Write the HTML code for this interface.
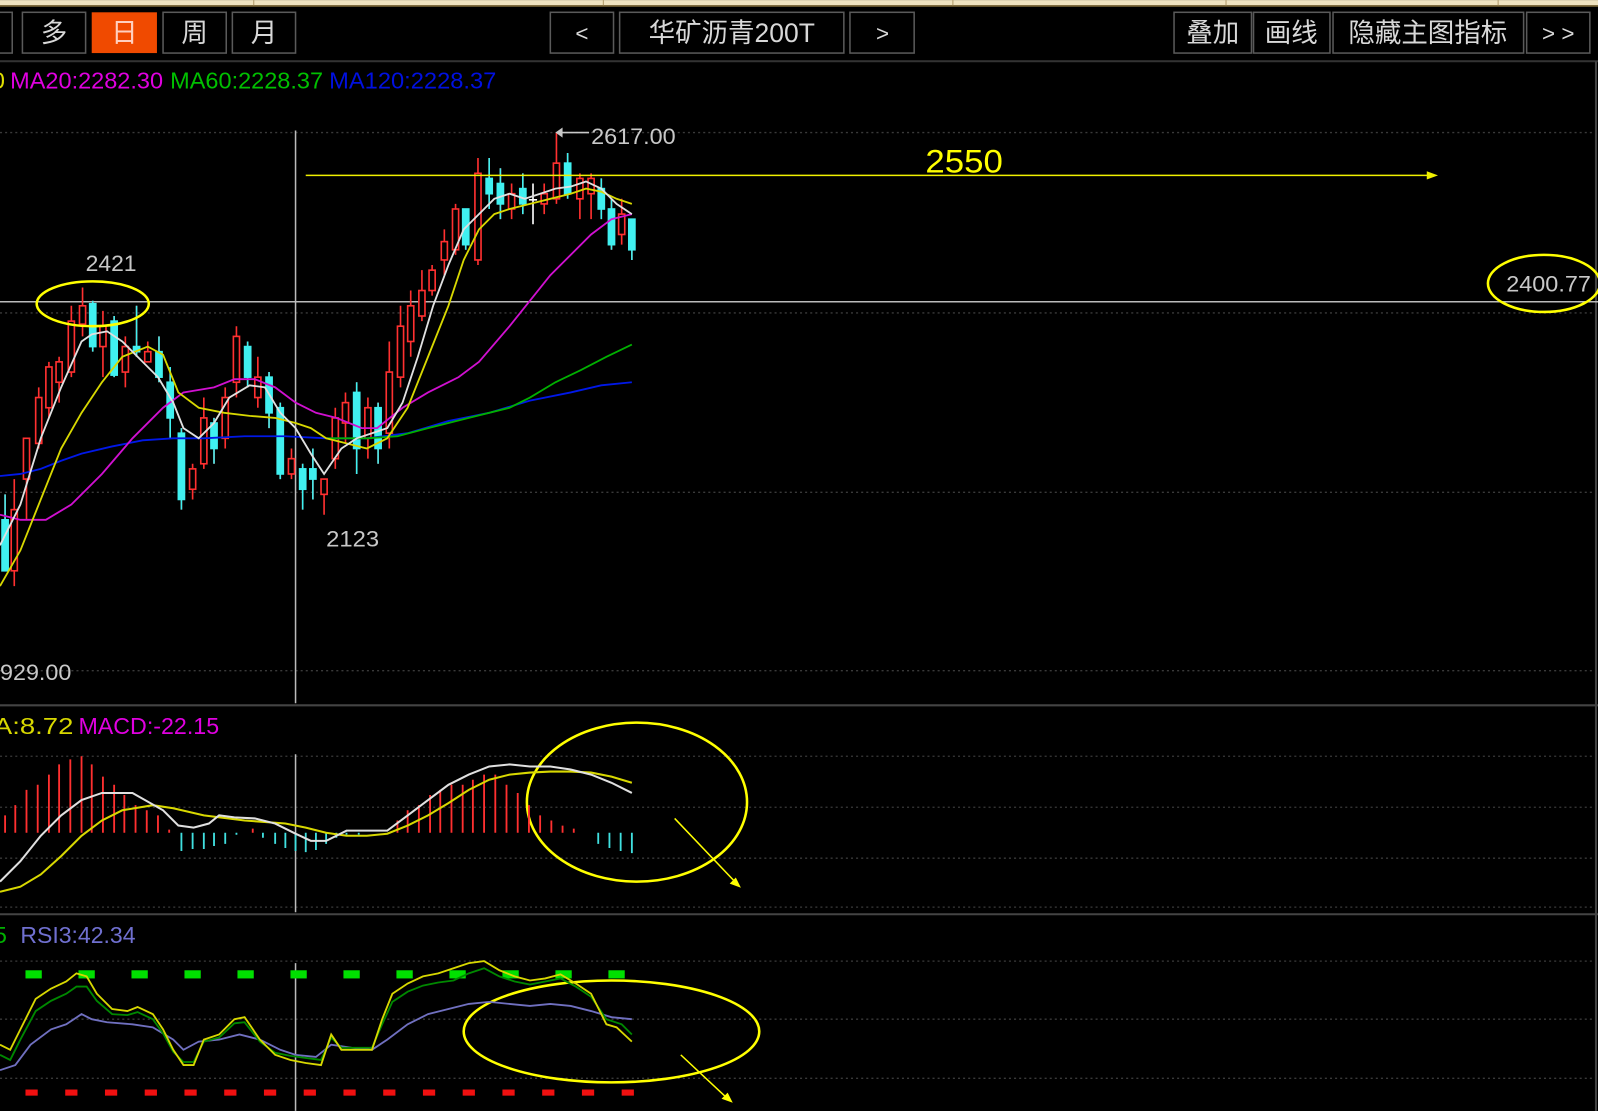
<!DOCTYPE html>
<html><head><meta charset="utf-8"><style>
html,body{margin:0;padding:0;background:#000;overflow:hidden}
svg{display:block}
text{font-family:"Liberation Sans","Noto Sans CJK SC",sans-serif}
</style></head><body>
<svg width="1598" height="1111" viewBox="0 0 1568 1090" xmlns="http://www.w3.org/2000/svg">
<rect width="1568" height="1090" fill="#000"/>
<rect x="0" y="0" width="1568" height="5" fill="#efe3c0"/>
<rect x="0" y="5" width="1568" height="1.5" fill="#8a7440"/>
<g stroke="#b09a6a" stroke-width="1"><line x1="249" y1="0" x2="249" y2="5"/><line x1="592" y1="0" x2="592" y2="5"/><line x1="935" y1="0" x2="935" y2="5"/><line x1="1203" y1="0" x2="1203" y2="5"/><line x1="1470" y1="0" x2="1470" y2="5"/></g>
<g fill="#000" stroke="#5a5a5a" stroke-width="1.5">
<rect x="-5" y="12" width="17" height="40"/>
<rect x="22" y="12" width="62" height="40"/>
<rect x="160" y="12" width="62" height="40"/>
<rect x="228" y="12" width="62" height="40"/>
<rect x="540" y="12" width="62" height="40"/>
<rect x="608" y="12" width="220" height="40"/>
<rect x="834" y="12" width="63" height="40"/>
<rect x="1152" y="12" width="76" height="40"/>
<rect x="1230" y="12" width="75" height="40"/>
<rect x="1308" y="12" width="187" height="40"/>
<rect x="1498" y="12" width="62" height="40"/>
</g>
<rect x="90" y="12" width="64" height="40" fill="#f04a00"/>
<g fill="#d8d8d8" font-size="26" text-anchor="middle">
<text x="53" y="41">多</text>
<text x="122" y="41" fill="#ffd0c0">日</text>
<text x="191" y="41">周</text>
<text x="259" y="41">月</text>
<text x="571" y="40" font-size="22">&lt;</text>
<text x="718" y="41">华矿沥青200T</text>
<text x="866" y="40" font-size="22">&gt;</text>
<text x="1190" y="41">叠加</text>
<text x="1267" y="41">画线</text>
<text x="1401" y="41">隐藏主图指标</text>
<text x="1529" y="40" font-size="22">&gt; &gt;</text>
</g>
<rect x="0" y="59" width="1568" height="2" fill="#333"/>
<g font-size="23" lengthAdjust="spacingAndGlyphs">
<text x="-8" y="87" fill="#e0e000">0</text>
<text x="10" y="87" fill="#e000e0" textLength="150" lengthAdjust="spacingAndGlyphs">MA20:2282.30</text>
<text x="167" y="87" fill="#00c000" textLength="150" lengthAdjust="spacingAndGlyphs">MA60:2228.37</text>
<text x="323" y="87" fill="#0010e0" textLength="164" lengthAdjust="spacingAndGlyphs">MA120:2228.37</text>
</g>
<g stroke="#3a3a3a" stroke-width="1.3" stroke-dasharray="2,3">
<line x1="0" y1="130" x2="1565" y2="130"/><line x1="0" y1="307" x2="1565" y2="307"/>
<line x1="0" y1="483" x2="1565" y2="483"/><line x1="0" y1="658" x2="1565" y2="658"/>
<line x1="0" y1="742" x2="1565" y2="742"/><line x1="0" y1="792" x2="1565" y2="792"/>
<line x1="0" y1="842" x2="1565" y2="842"/><line x1="0" y1="890" x2="1565" y2="890"/>
<line x1="0" y1="943" x2="1565" y2="943"/><line x1="0" y1="1000" x2="1565" y2="1000"/>
<line x1="0" y1="1058" x2="1565" y2="1058"/>
</g>
<g stroke="#444" stroke-width="2"><line x1="0" y1="692" x2="1568" y2="692"/><line x1="0" y1="897" x2="1568" y2="897"/><line x1="1566" y1="60" x2="1566" y2="1090"/></g>
<g stroke="#bbb" stroke-width="1.5"><line x1="290" y1="128" x2="290" y2="690"/><line x1="290" y1="740" x2="290" y2="895"/><line x1="290" y1="945" x2="290" y2="1090"/><line x1="0" y1="296" x2="1568" y2="296"/></g>
<g stroke-width="1.6">
<path d="M5 485V560M14 470V575M26 430V510M38 380V440M48 355V410M58 350V395M70 300V370M81 282V330M91 295V345M101 305V370M112 310V370M123 330V380M134 300V350M145 335V355M156 330V375M167 360V430M178 420V500M189 455V490M200 390V460M210 410V455M221 380V440M232 320V390M243 335V380M253 350V400M264 365V420M275 395V470M286 440V470M297 455V500M307 440V490M318 470V505M329 400V460M339 385V435M350 375V465M361 390V450M371 395V455M382 335V440M393 300V380M403 285V350M414 265V315M424 260V290M436 225V270M447 200V250M457 205V245M469 155V260M480 155V205M491 165V215M502 180V215M513 170V210M534 180V210M546 130V200M557 150V195M569 170V215M580 170V215M590 175V215M600 195V245M610 195V240M620 215V255" stroke="#ff3030"/>
</g>
<g stroke="#ff3030" stroke-width="1.6" fill="#000">
<rect x="11" y="500" width="6" height="60"/><rect x="23" y="430" width="6" height="40"/><rect x="35" y="390" width="6" height="45"/><rect x="45" y="360" width="6" height="40"/><rect x="55" y="355" width="6" height="20"/><rect x="67" y="315" width="6" height="50"/><rect x="78" y="300" width="6" height="18"/><rect x="98" y="320" width="6" height="20"/><rect x="120" y="340" width="6" height="25"/><rect x="142" y="345" width="6" height="10"/><rect x="186" y="460" width="6" height="20"/><rect x="197" y="410" width="6" height="45"/><rect x="218" y="390" width="6" height="40"/><rect x="229" y="330" width="6" height="45"/><rect x="250" y="370" width="6" height="20"/><rect x="283" y="450" width="6" height="15"/><rect x="315" y="470" width="6" height="15"/><rect x="326" y="410" width="6" height="40"/><rect x="336" y="395" width="6" height="20"/><rect x="358" y="400" width="6" height="30"/><rect x="379" y="365" width="6" height="60"/><rect x="390" y="320" width="6" height="50"/><rect x="400" y="300" width="6" height="35"/><rect x="411" y="285" width="6" height="25"/><rect x="421" y="265" width="6" height="20"/><rect x="433" y="237" width="6" height="18"/><rect x="444" y="205" width="6" height="40"/><rect x="466" y="170" width="6" height="85"/><rect x="499" y="190" width="6" height="15"/><rect x="531" y="190" width="6" height="10"/><rect x="543" y="160" width="6" height="35"/><rect x="566" y="175" width="6" height="20"/><rect x="577" y="175" width="6" height="15"/><rect x="607" y="210" width="6" height="20"/>
</g>
<g stroke="#40f0f0" stroke-width="1.6" fill="#40f0f0">
<path d="M5 485V560M91 295V345M112 310V370M134 300V350M156 330V375M167 360V430M178 420V500M210 410V455M243 335V380M264 365V420M275 395V470M297 455V500M307 440V490M350 375V465M371 395V455M457 205V245M480 155V205M491 165V215M513 170V210M557 150V195M590 175V215M600 195V245M620 215V255"/>
<rect x="2" y="510" width="6" height="50"/><rect x="88" y="298" width="6" height="42"/><rect x="109" y="315" width="6" height="53"/><rect x="131" y="340" width="6" height="5"/><rect x="153" y="345" width="6" height="25"/><rect x="164" y="375" width="6" height="35"/><rect x="175" y="425" width="6" height="65"/><rect x="207" y="415" width="6" height="25"/><rect x="240" y="340" width="6" height="30"/><rect x="261" y="370" width="6" height="35"/><rect x="272" y="400" width="6" height="65"/><rect x="294" y="460" width="6" height="20"/><rect x="304" y="460" width="6" height="10"/><rect x="347" y="385" width="6" height="55"/><rect x="368" y="400" width="6" height="40"/><rect x="454" y="205" width="6" height="35"/><rect x="477" y="175" width="6" height="15"/><rect x="488" y="180" width="6" height="20"/><rect x="510" y="185" width="6" height="15"/><rect x="554" y="160" width="6" height="30"/><rect x="587" y="185" width="6" height="20"/><rect x="597" y="205" width="6" height="35"/><rect x="617" y="215" width="6" height="30"/>
</g>
<path d="M523 180V220M519 196H527" stroke="#fff" stroke-width="1.6"/>
<g fill="none" stroke-width="1.8">
<polyline stroke="#0018e8" points="0,467 20,465 40,460 60,452 80,445 110,438 140,432 170,430 200,430 240,428 280,428 320,430 360,430 400,425 440,413 480,405 520,393 560,385 590,378 620,375"/>
<polyline stroke="#00b000" points="320,430 360,430 390,428 420,420 460,410 500,400 520,390 545,375 570,363 595,350 620,338"/>
<polyline stroke="#d010d0" points="0,505 20,510 45,510 70,495 100,465 130,430 160,400 180,385 210,380 230,372 250,372 270,380 290,395 310,405 330,410 355,420 370,420 395,400 420,385 450,370 470,355 500,320 520,295 540,270 560,250 580,230 600,215 620,210"/>
<polyline stroke="#d8d800" points="0,575 20,540 40,490 60,440 80,405 100,375 120,350 145,340 160,348 175,385 195,400 220,405 245,408 270,410 290,415 305,420 320,430 340,435 360,440 380,430 400,400 420,350 440,300 455,255 470,225 485,210 500,205 520,200 540,195 560,190 575,185 590,188 605,195 620,200"/>
<polyline stroke="#e0e0e0" points="0,535 20,495 40,430 60,380 80,335 90,328 105,325 120,335 140,355 155,370 170,395 180,420 195,430 210,415 225,390 245,378 260,380 275,405 290,420 305,445 318,465 335,440 350,430 365,425 380,420 395,395 410,350 425,300 440,260 455,225 470,210 485,195 500,190 515,195 530,190 545,185 560,183 575,178 590,185 605,200 620,210"/>
</g>
<g font-size="22" fill="#c8c8c8">
<text x="84" y="266" textLength="50" lengthAdjust="spacingAndGlyphs">2421</text>
<text x="320" y="536" textLength="52" lengthAdjust="spacingAndGlyphs">2123</text>
<text x="580" y="141" textLength="83" lengthAdjust="spacingAndGlyphs">2617.00</text>
<text x="0" y="667" textLength="70" lengthAdjust="spacingAndGlyphs">929.00</text>
<text x="1478" y="286" textLength="83" lengthAdjust="spacingAndGlyphs">2400.77</text>
</g>
<path d="M548 130H578" stroke="#c8c8c8" stroke-width="1.5"/><path d="M545 130l7-5v10z" fill="#c8c8c8"/>
<line x1="300" y1="172" x2="1402" y2="172" stroke="#f0f000" stroke-width="1.5"/>
<path d="M1411 172l-11-4v8z" fill="#f0f000"/>
<text x="908" y="169" font-size="32" fill="#ffff00" textLength="76" lengthAdjust="spacingAndGlyphs">2550</text>
<g fill="none" stroke="#ffff00" stroke-width="2.5">
<ellipse cx="91" cy="298" rx="55" ry="22"/>
<ellipse cx="1515" cy="278" rx="55" ry="28"/>
<ellipse cx="625" cy="787" rx="108" ry="78"/>
<ellipse cx="600" cy="1012" rx="145" ry="50"/>
</g>
<g stroke="#ffff00" stroke-width="1.5"><line x1="662" y1="803" x2="722" y2="866"/><line x1="668" y1="1035" x2="714" y2="1078"/></g>
<path d="M727 871l-11-4 6-6z M719 1082l-11-4 6-6z" fill="#ffff00"/>
<g font-size="23"><text x="-6" y="720" fill="#d8d800" textLength="78" lengthAdjust="spacingAndGlyphs">A:8.72</text><text x="77" y="720" fill="#e000e0" textLength="138" lengthAdjust="spacingAndGlyphs">MACD:-22.15</text></g>
<g stroke="#ff3030" stroke-width="1.8"><path d="M5 817V800M15 817V790M26 817V775M37 817V770M48 817V760M58 817V750M69 817V745M80 817V742M90 817V750M101 817V762M112 817V770M122 817V780M133 817V790M144 817V795M155 817V800M166 817V814M248 817V813M390 817V805M400 817V795M411 817V790M422 817V780M432 817V775M443 817V770M454 817V770M464 817V765M475 817V760M486 817V760M497 817V770M508 817V778M519 817V790M530 817V800M541 817V805M552 817V810M563 817V813"/></g>
<g stroke="#40e0e0" stroke-width="1.8"><path d="M178 817V835M189 817V833M200 817V833M210 817V830M221 817V828M232 817V819M258 817V822M270 817V828M280 817V832M290 817V835M300 817V836M310 817V834M320 817V828M330 817V822M340 817V819M352 817V819M587 817V828M598 817V832M609 817V835M620 817V837"/></g>
<g fill="none" stroke-width="2">
<polyline stroke="#d8d800" points="0,875 20,870 40,858 60,840 80,820 100,805 120,795 150,790 170,793 200,800 240,805 280,808 300,812 320,817 340,820 360,820 380,818 400,810 420,800 440,788 460,775 480,765 500,760 520,758 540,757 560,757 580,758 600,762 620,768"/>
<polyline stroke="#e0e0e0" points="0,865 20,845 40,820 60,800 80,785 100,778 130,778 160,795 175,810 190,812 205,808 215,800 230,802 250,803 270,808 290,818 305,825 320,825 340,815 360,815 380,815 400,800 420,785 440,770 460,760 480,752 500,750 520,752 540,752 560,755 580,760 600,768 620,778"/>
</g>
<g font-size="23"><text x="-6" y="925" fill="#00b000">5</text><text x="20" y="925" fill="#7070d0" textLength="113" lengthAdjust="spacingAndGlyphs">RSI3:42.34</text></g>
<g fill="#00e000"><rect x="25" y="952" width="16" height="8"/><rect x="77" y="952" width="16" height="8"/><rect x="129" y="952" width="16" height="8"/><rect x="181" y="952" width="16" height="8"/><rect x="233" y="952" width="16" height="8"/><rect x="285" y="952" width="16" height="8"/><rect x="337" y="952" width="16" height="8"/><rect x="389" y="952" width="16" height="8"/><rect x="441" y="952" width="16" height="8"/><rect x="493" y="952" width="16" height="8"/><rect x="545" y="952" width="16" height="8"/><rect x="597" y="952" width="16" height="8"/></g>
<g fill="#f01010"><rect x="25" y="1069" width="12" height="6"/><rect x="64" y="1069" width="12" height="6"/><rect x="103" y="1069" width="12" height="6"/><rect x="142" y="1069" width="12" height="6"/><rect x="181" y="1069" width="12" height="6"/><rect x="220" y="1069" width="12" height="6"/><rect x="259" y="1069" width="12" height="6"/><rect x="298" y="1069" width="12" height="6"/><rect x="337" y="1069" width="12" height="6"/><rect x="376" y="1069" width="12" height="6"/><rect x="415" y="1069" width="12" height="6"/><rect x="454" y="1069" width="12" height="6"/><rect x="493" y="1069" width="12" height="6"/><rect x="532" y="1069" width="12" height="6"/><rect x="571" y="1069" width="12" height="6"/><rect x="610" y="1069" width="12" height="6"/></g>
<g fill="none" stroke-width="1.8">
<polyline stroke="#7070c0" points="0,1050 15,1045 30,1025 50,1010 65,1005 80,995 90,1000 105,1003 130,1005 150,1008 170,1020 180,1030 195,1022 215,1020 235,1015 255,1020 275,1030 290,1035 310,1037 325,1025 345,1028 365,1030 380,1020 400,1005 420,995 440,990 460,985 480,983 500,985 520,987 540,985 560,987 580,992 600,998 620,1000"/>
<polyline stroke="#008800" points="0,1035 10,1040 20,1020 35,992 50,982 65,975 75,968 85,968 95,982 110,995 125,996 135,993 150,1000 160,1014 170,1032 180,1042 190,1042 200,1022 215,1018 230,1004 240,1003 255,1022 270,1033 285,1036 300,1038 315,1040 325,1018 335,1028 350,1028 365,1028 375,1005 385,983 400,973 415,967 430,964 445,962 460,955 475,950 490,958 505,963 520,966 535,963 550,960 565,968 580,978 595,1000 610,1005 620,1015"/>
<polyline stroke="#d8d800" points="0,1025 10,1030 20,1010 35,980 50,970 65,963 75,955 85,958 95,975 110,990 125,992 135,988 150,995 160,1010 170,1030 180,1045 190,1045 200,1020 215,1015 230,1000 240,998 255,1020 270,1035 285,1040 300,1043 315,1045 325,1015 335,1030 350,1030 365,1030 375,1000 385,975 400,965 415,958 430,955 445,950 460,945 475,943 490,952 505,958 520,962 535,960 550,956 565,965 580,975 595,1005 605,1008 620,1022"/>
</g>
</svg>
</body></html>
